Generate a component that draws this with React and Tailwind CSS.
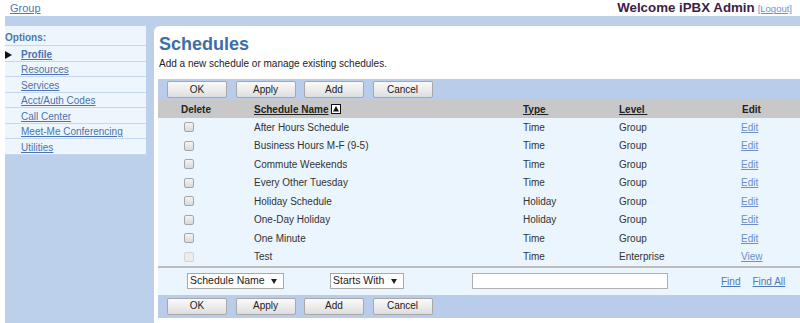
import React from "react";

const MENU = [
  { label: "Profile", active: true },
  { label: "Resources" },
  { label: "Services" },
  { label: "Acct/Auth Codes" },
  { label: "Call Center" },
  { label: "Meet-Me Conferencing" },
  { label: "Utilities" },
];

const SCHEDULES = [
  { name: "After Hours Schedule", type: "Time", level: "Group", action: "Edit" },
  { name: "Business Hours M-F (9-5)", type: "Time", level: "Group", action: "Edit" },
  { name: "Commute Weekends", type: "Time", level: "Group", action: "Edit" },
  { name: "Every Other Tuesday", type: "Time", level: "Group", action: "Edit" },
  { name: "Holiday Schedule", type: "Holiday", level: "Group", action: "Edit" },
  { name: "One-Day Holiday", type: "Holiday", level: "Group", action: "Edit" },
  { name: "One Minute", type: "Time", level: "Group", action: "Edit" },
  { name: "Test", type: "Time", level: "Enterprise", action: "View", locked: true },
];

const BUTTONS = ["OK", "Apply", "Add", "Cancel"];

function ButtonBar({ className }) {
  return (
    <div className={"flex items-center gap-[8.5px] pl-[9px] bg-[#b9cdea] " + className}>
      {BUTTONS.map((b) => (
        <button
          key={b}
          className="w-[60px] h-[17px] border border-[#a8a8a8] rounded-[2px] bg-gradient-to-b from-[#fafafa] to-[#dedede] text-[10px] text-[#222] leading-none"
        >
          {b}
        </button>
      ))}
    </div>
  );
}

function Checkbox({ disabled }) {
  return (
    <span
      className={
        "block w-[10px] h-[10px] rounded-[2px] border " +
        (disabled
          ? "border-[#d4d4d4] bg-[#ececec]"
          : "border-[#a6a6a6] bg-gradient-to-b from-[#f4f4f4] to-[#d9d9d9]")
      }
    />
  );
}

function DropArrow() {
  return (
    <svg width="6" height="5" viewBox="0 0 6 5" className="block">
      <polygon points="0,0 6,0 3,5" fill="#222" />
    </svg>
  );
}

export default function App() {
  return (
    <div className="w-[800px] h-[323px] overflow-hidden bg-white text-[10px] text-[#333] font-['Liberation_Sans',Arial,sans-serif]">
      <header className="h-4 flex items-center justify-between pl-[10px] pr-[8px]">
        <a className="text-[11px] text-[#4f77b4] underline leading-none">Group</a>
        <div className="flex items-baseline gap-[3px]">
          <span className="text-[13.3px] font-bold text-[#3c2146] leading-none">Welcome iPBX Admin</span>
          <a className="text-[9.5px] text-[#6b8fc9] underline leading-none">[Logout]</a>
        </div>
      </header>

      <div className="flex ml-[5px] h-[307px] pt-[10px] bg-[#bcd0ec]">
        <aside className="w-[141px] self-start bg-[#eef6fd]">
          <div className="h-[20px] pt-[3px] border-b border-[#c4d7ef] flex items-center text-[10px] font-bold text-[#4f76ab]">
            Options:
          </div>
          {MENU.map((m) => (
            <div
              key={m.label}
              className="h-[15.5px] pt-[3px] border-b border-[#c4d7ef] flex items-center relative pl-[16px]"
            >
              {m.active && (
                <svg width="7" height="8" viewBox="0 0 7 8" className="absolute left-0 top-[5px]">
                  <polygon points="0,0 7,4 0,8" fill="#111" />
                </svg>
              )}
              <a className={"text-[10px] text-[#4b73ad] underline leading-none" + (m.active ? " font-bold" : "")}>
                {m.label}
              </a>
            </div>
          ))}
        </aside>

        <main className="ml-[8px] flex-1 bg-white rounded-tl-[6px] pl-[4px]">
          <h1 className="mt-[7px] pl-[1px] h-[22px] leading-[22px] text-[18px] font-bold text-[#3d6ea7]">Schedules</h1>
          <p className="mt-[2px] pl-[1px] leading-[14px] text-[10px] text-[#222]">
            Add a new schedule or manage existing schedules.
          </p>

          <ButtonBar className="mt-[8px] h-[21px]" />

          <div className="flex items-center h-[18px] bg-[#c8c8c8] font-bold text-[#222]">
            <div className="w-[96px] pl-[23px]">Delete</div>
            <div className="w-[269px] flex items-center gap-[3px]">
              <span className="underline">Schedule Name</span>
              <svg width="10" height="10" viewBox="0 0 10 10" className="block">
                <rect x="0.5" y="0.5" width="9" height="9" fill="#fff" stroke="#111" />
                <polygon points="5,2 8,7.5 2,7.5" fill="#111" />
              </svg>
            </div>
            <div className="w-[96px]"><span className="underline whitespace-pre">Type </span></div>
            <div className="w-[122px]"><span className="underline whitespace-pre">Level </span></div>
            <div className="pl-[1px]">Edit</div>
          </div>

          <div className="bg-[#eaf5fd]">
            {SCHEDULES.map((s) => (
              <div key={s.name} className="flex items-center h-[18.5px]">
                <div className="w-[96px] pl-[26px]">
                  <Checkbox disabled={s.locked} />
                </div>
                <div className="w-[269px]">{s.name}</div>
                <div className="w-[96px]">{s.type}</div>
                <div className="w-[122px]">{s.level}</div>
                <a className="text-[#6b8fc9] underline">{s.action}</a>
              </div>
            ))}
            <div className="h-[1.5px] bg-[#bdbdbd]" />
            <div className="flex items-center h-[27px] pl-[29px]">
              <div className="w-[97px] h-[16px] border border-[#a9a9a9] bg-white flex items-center justify-between pl-[2px] pr-[6px] text-[10.5px] text-[#222]">
                <span>Schedule Name</span>
                <DropArrow />
              </div>
              <div className="ml-[46px] w-[74px] h-[16px] border border-[#a9a9a9] bg-white flex items-center justify-between pl-[2px] pr-[6px] text-[10.5px] text-[#222]">
                <span>Starts With</span>
                <DropArrow />
              </div>
              <div className="ml-[68px] w-[196px] h-[16px] border border-[#b0b0b0] bg-white" />
              <a className="ml-[53px] text-[#4d79b9] underline">Find</a>
              <a className="ml-[12px] text-[#4d79b9] underline">Find All</a>
            </div>
          </div>

          <ButtonBar className="h-[23px]" />
        </main>
      </div>
    </div>
  );
}
